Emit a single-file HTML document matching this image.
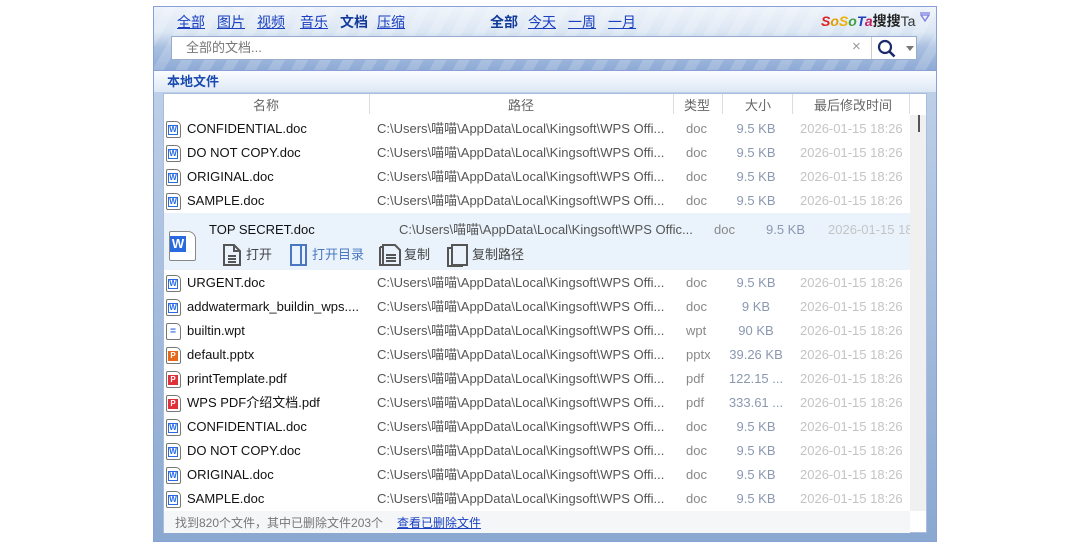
<!DOCTYPE html>
<html><head><meta charset="utf-8"><style>
*{margin:0;padding:0;box-sizing:border-box}
body{width:1090px;height:545px;background:#fff;position:relative;overflow:hidden;font-family:"Liberation Sans","Noto Sans CJK SC",sans-serif;font-size:13px}
.a{position:absolute;white-space:nowrap;line-height:16px}
#win{position:absolute;left:153px;top:6px;width:784px;height:536px;background:linear-gradient(#c7d7ec,#8aa8d0);border:1px solid #8a9fd8}
#hdr{position:absolute;left:154px;top:7px;width:782px;height:63px;background:repeating-linear-gradient(120deg,rgba(255,255,255,0) 0 10px,rgba(255,255,255,.18) 10px 20px),linear-gradient(#eef3fa 0,#dbe6f3 25px,#a9c0e0 40px,#8eaad5 63px)}
.nav{color:#1a3fc0;text-decoration:underline;font-size:14px;top:14px}
.b{font-weight:bold;text-decoration:none;color:#123a9a}
#search{position:absolute;left:171px;top:36px;width:746px;height:24px;background:#fff;border:1px solid #98acd0}
#loc{position:absolute;left:154px;top:70px;width:782px;height:22px;background:linear-gradient(#fafcff,#dde8f5);border-top:1px solid #8a9fd8}
#list{position:absolute;left:163px;top:93px;width:764px;height:440px;background:#fff;border:1px solid #a8bde0}
.hd{color:#666;top:98px;font-size:13px}
.sep{position:absolute;top:94px;width:1px;height:20px;background:#ddd}
.n{left:187px;color:#111}
.p{left:377px;color:#555}
.t{left:686px;color:#888}
.s{color:#8a98b0;width:60px;text-align:center;left:726px}
.d{left:800px;color:#c4c4c4}
.ic{position:absolute;left:166px;width:15px;height:17px;border:1px solid #777;border-radius:2px 5px 2px 2px;background:#fff}
.ic i{position:absolute;left:1px;top:3px;width:10px;height:10px;font-style:normal;font-size:8px;color:#fff;text-align:center;line-height:10px;font-weight:bold}
</style></head><body>
<div id="win"></div>
<div id="hdr"></div>
<span class="a nav" style="left:177px">全部</span>
<span class="a nav" style="left:217px">图片</span>
<span class="a nav" style="left:257px">视频</span>
<span class="a nav" style="left:300px">音乐</span>
<span class="a nav b" style="left:340px">文档</span>
<span class="a nav" style="left:377px">压缩</span>
<span class="a nav b" style="left:490px">全部</span>
<span class="a nav" style="left:528px">今天</span>
<span class="a nav" style="left:568px">一周</span>
<span class="a nav" style="left:608px">一月</span>
<span class="a" style="left:821px;top:13px;font-size:14px;font-weight:bold;font-style:italic"><span style="color:#e02020">S</span><span style="color:#e0a000">o</span><span style="color:#f0b000">S</span><span style="color:#40a040">o</span><span style="color:#2040c0">T</span><span style="color:#c02060">a</span><span style="color:#222;font-style:normal">搜搜</span><span style="color:#333;font-weight:normal;font-style:normal">Ta</span></span>
<svg class="a" style="left:919px;top:12px" width="12" height="12"><path d="M1 1h10M2 3h8l-4 6z" stroke="#7a7ae0" fill="none" stroke-width="1.3"/></svg>
<div id="search"></div>
<span class="a" style="left:186px;top:40px;color:#777;font-size:13px">全部的文档...</span>
<span class="a" style="left:852px;top:39px;color:#999;font-size:15px">×</span>
<div class="a" style="left:871px;top:37px;width:1px;height:22px;background:#ccc"></div>
<svg class="a" style="left:877px;top:39px" width="20" height="20"><circle cx="8" cy="8" r="6" stroke="#1a2a6a" stroke-width="2.2" fill="none"/><path d="M12.5 12.5l5 5" stroke="#1a2a6a" stroke-width="2.6"/></svg>
<svg class="a" style="left:906px;top:46px" width="8" height="5"><path d="M0 0h8l-4 5z" fill="#777"/></svg>
<div id="loc"></div>
<span class="a" style="left:167px;top:74px;color:#1a4ab0;font-weight:bold">本地文件</span>
<div id="list"></div>
<div class="a" style="left:910px;top:115px;width:16px;height:396px;background:#f0f0f0"></div>
<div class="a" style="left:918px;top:115px;width:2px;height:17px;background:#555"></div>
<span class="a hd" style="left:253px">名称</span><span class="a hd" style="left:508px">路径</span><span class="a hd" style="left:684px">类型</span><span class="a hd" style="left:745px">大小</span><span class="a hd" style="left:814px">最后修改时间</span>
<div class="sep" style="left:369px"></div><div class="sep" style="left:673px"></div><div class="sep" style="left:722px"></div><div class="sep" style="left:792px"></div><div class="sep" style="left:909px"></div>
<div class="a" style="left:164px;top:213px;width:746px;height:57px;background:#eaf3fc"></div>
<div class="a" style="left:169px;top:231px;width:27px;height:30px;border:1px solid #888;border-radius:2px 8px 2px 2px;background:#fff"></div>
<div class="a" style="left:170px;top:236px;width:16px;height:16px;background:#2a6ae0;color:#fff;font-weight:bold;font-size:13px;text-align:center;line-height:16px">W</div>
<span class="a" style="left:209px;top:222px;color:#111">TOP SECRET.doc</span>
<span class="a" style="left:399px;top:222px;color:#555">C:\Users\喵喵\AppData\Local\Kingsoft\WPS Offic...</span>
<span class="a" style="left:714px;top:222px;color:#888">doc</span>
<span class="a" style="left:766px;top:222px;color:#8a98b0">9.5 KB</span>
<span class="a" style="left:828px;top:222px;color:#c4c4c4;width:82px;overflow:hidden">2026-01-15 18:26</span>
<svg class="a" style="left:222px;top:243px" width="20" height="24"><path d="M2 2h10l6 6v14H2zM12 2v6h6M6 13h8M6 16h8M6 19h8" stroke="#555" stroke-width="2" fill="none"/></svg>
<span class="a" style="left:246px;top:247px;color:#444">打开</span>
<svg class="a" style="left:289px;top:243px" width="20" height="24"><path d="M2 2h15v20H2zM12 2v20" stroke="#4a78c0" stroke-width="2" fill="none"/></svg>
<span class="a" style="left:312px;top:247px;color:#4a78c0">打开目录</span>
<svg class="a" style="left:379px;top:243px" width="22" height="24"><path d="M1 4h3M4 2h12l5 5v15H4zM7 12h10M7 15h10M7 18h10M1 4v18h3" stroke="#555" stroke-width="2" fill="none"/></svg>
<span class="a" style="left:404px;top:247px;color:#444">复制</span>
<svg class="a" style="left:447px;top:243px" width="22" height="24"><path d="M5 2h15v20H5zM5 5H1v18h15" stroke="#555" stroke-width="2" fill="none"/></svg>
<span class="a" style="left:472px;top:247px;color:#444">复制路径</span>
<div id="rows"></div>
<div class="a" style="left:164px;top:511px;width:746px;height:22px;background:#f4f6f8"></div>
<span class="a" style="left:175px;top:515px;color:#777;font-size:12px">找到820个文件，其中已删除文件203个</span>
<span class="a" style="left:397px;top:515px;color:#1a3fc0;text-decoration:underline;font-size:12px">查看已删除文件</span>
<script>
var R=[["CONFIDENTIAL.doc","doc","9.5 KB","w"],["DO NOT COPY.doc","doc","9.5 KB","w"],["ORIGINAL.doc","doc","9.5 KB","w"],["SAMPLE.doc","doc","9.5 KB","w"],["URGENT.doc","doc","9.5 KB","w"],["addwatermark_buildin_wps....","doc","9 KB","w"],["builtin.wpt","wpt","90 KB","t"],["default.pptx","pptx","39.26 KB","p"],["printTemplate.pdf","pdf","122.15 ...","f"],["WPS PDF介绍文档.pdf","pdf","333.61 ...","f"],["CONFIDENTIAL.doc","doc","9.5 KB","w"],["DO NOT COPY.doc","doc","9.5 KB","w"],["ORIGINAL.doc","doc","9.5 KB","w"],["SAMPLE.doc","doc","9.5 KB","w"]];
var h="";R.forEach(function(r,i){var y=i<4?121+i*24:275+(i-4)*24;var ic=r[3]=="w"?'<i style="background:#fff;color:#2a6ae0;border:1px solid #2a6ae0;line-height:8px">W</i>':r[3]=="p"?'<i style="background:#e8681a">P</i>':r[3]=="f"?'<i style="background:#e0303a">P</i>':'<i style="color:#2a6ae0;font-size:10px">=</i>';
h+='<div class="ic" style="top:'+y+'px">'+ic+'</div><span class="a n" style="top:'+y+'px">'+r[0]+'</span><span class="a p" style="top:'+y+'px">C:\\Users\\喵喵\\AppData\\Local\\Kingsoft\\WPS Offi...</span><span class="a t" style="top:'+y+'px">'+r[1]+'</span><span class="a s" style="top:'+y+'px">'+r[2]+'</span><span class="a d" style="top:'+y+'px">2026-01-15 18:26</span>';});
document.getElementById("rows").innerHTML=h;
</script>
</body></html>
